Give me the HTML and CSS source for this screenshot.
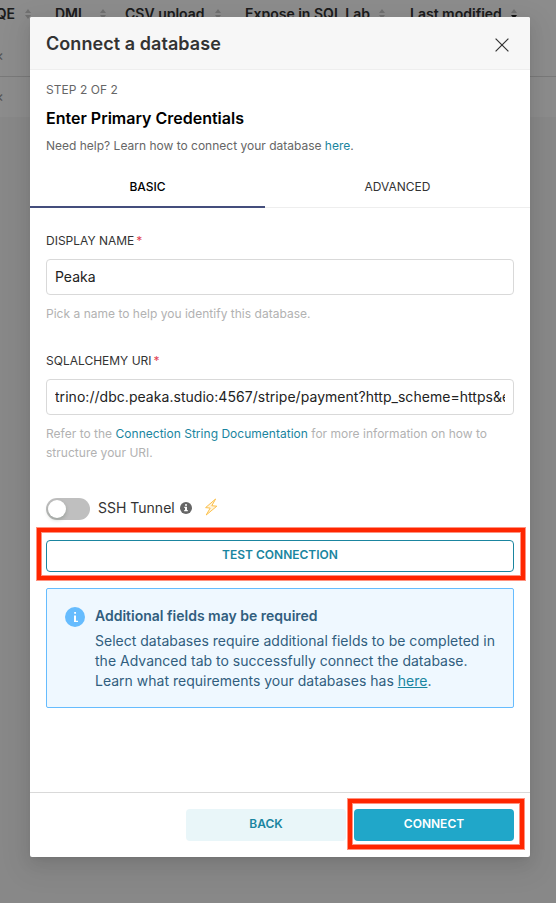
FILE: index.html
```html
<!DOCTYPE html>
<html lang="en">
<head>
<meta charset="utf-8">
<title>Connect a database</title>
<link rel="stylesheet" href="styles.css">
</head>
<body>
<div class="page">
  <div class="table">
    <div class="table-head">
      <span class="col col-aqe">AQE <i class="sort"></i></span>
      <span class="col col-dml">DML <i class="sort"></i></span>
      <span class="col col-csv">CSV upload <i class="sort"></i></span>
      <span class="col col-lab">Expose in SQL Lab <i class="sort"></i></span>
      <span class="col col-mod">Last modified <i class="sort sort-desc"></i></span>
    </div>
    <div class="table-row"><span class="cross">×</span></div>
    <div class="table-row"><span class="cross">×</span></div>
  </div>
</div>
<div class="mask">
  <div class="modal" role="dialog">
    <header class="modal-header">
      <h1 class="modal-title">Connect a database</h1>
      <svg class="close" viewBox="0 0 14 14"><path d="M.6.6l12.8 12.8M13.4.6L.6 13.4"/></svg>
    </header>
    <main class="modal-body">
      <div class="intro">
        <p class="step">STEP 2 OF 2</p>
        <h2 class="heading">Enter Primary Credentials</h2>
        <p class="help">Need help? Learn how to connect your database <a>here</a>.</p>
      </div>
      <nav class="tabs">
        <div class="tab active"><span>BASIC</span></div>
        <div class="tab"><span>ADVANCED</span></div>
      </nav>
      <div class="form">
        <div class="field">
          <label class="label"><span>DISPLAY NAME</span><span class="req">*</span></label>
          <div class="input"><span class="value">Peaka</span></div>
          <p class="hint">Pick a name to help you identify this database.</p>
        </div>
        <div class="field field-uri">
          <label class="label"><span>SQLALCHEMY URI</span><span class="req">*</span></label>
          <div class="input"><span class="value uri">trino://dbc.peaka.studio:4567/stripe/payment?http_scheme=https&amp;extra</span></div>
          <p class="hint">Refer to the <a>Connection String Documentation</a> for more information on how to structure your URI.</p>
        </div>
        <div class="ssh">
          <span class="switch"><span class="knob"></span></span>
          <span class="ssh-label">SSH Tunnel</span>
          <svg class="info" viewBox="0 0 12 12"><circle cx="6" cy="6" r="6" fill="#666"/><path d="M5 2.2h2v1.6H5zM4.3 4.8H7v3.3h.8v1.2H4.2V8.1H5V6h-.7z" fill="#fff"/></svg>
          <svg class="bolt" viewBox="0 0 14 18"><path d="M11.6 1L1.6 9.6l4.6.5-4 6.9L12.8 8.2l-5-.5z"/></svg>
        </div>
        <div class="test-button"><span>TEST CONNECTION</span><div class="marker marker-test"></div></div>
        <div class="alert">
          <svg class="alert-icon" viewBox="0 0 20 20"><circle cx="10" cy="10" r="10" fill="#66bcfe"/><path d="M9.2 5h1.8v1.7H9.2zM9 8.4h2v5.4h2V15H9z" fill="#fff"/></svg>
          <div class="alert-text">
            <strong class="alert-title">Additional fields may be required</strong>
            <p class="alert-copy">Select databases require additional fields to be completed in the Advanced tab to successfully connect the database. Learn what requirements your databases has <a>here</a>.</p>
          </div>
        </div>
      </div>
    </main>
    <footer class="modal-footer">
      <div class="button back">BACK</div>
      <div class="button connect"><span>CONNECT</span><div class="marker marker-connect"></div></div>
    </footer>
  </div>
</div>
</body>
</html>
```

FILE: styles.css
```css
* { box-sizing: border-box; }
body { margin: 0; height: 903px; overflow: hidden; font-family: Inter, "Liberation Sans", sans-serif; font-size: 14px; color: #333; background: #f7f7f7; }
h1, h2, p { margin: 0; }
a { color: #1a85a0; }

.page { height: 903px; overflow: hidden; }
.table { height: 117px; background: #fff; }
.table-head { height: 36px; position: relative; font-weight: 600; line-height: 20px; white-space: nowrap; }
.col { position: absolute; top: 4px; display: flex; align-items: center; gap: 10px; }
.col-aqe { left: -14px; }
.col-dml { left: 55px; gap: 14px; }
.col-csv { left: 125px; }
.col-lab { left: 245px; gap: 9px; }
.col-mod { left: 410px; gap: 9px; }
.sort { display: flex; flex-direction: column; gap: 2px; }
.sort::before, .sort::after { content: ""; border: 3px solid transparent; }
.sort::before { border-top: 0; border-bottom: 4px solid #ccc; }
.sort::after { border-bottom: 0; border-top: 4px solid #ccc; }
.sort-desc::after { border-top-color: #222; }
.table-row { height: 41px; border-bottom: 1px solid #ddd; line-height: 39px; }
.table-row:last-child { height: 40px; border: 0; }
.cross { margin-left: -6px; font-size: 15px; color: #999; }

.mask { position: absolute; inset: 0; padding: 17px 26px 0 30px; background: rgba(0, 0, 0, .45); }
.modal { width: 500px; height: 840px; display: flex; flex-direction: column; background: #fff; border-radius: 2px; box-shadow: 0 3px 6px -4px rgba(0,0,0,.12), 0 6px 16px rgba(0,0,0,.08), 0 9px 28px 8px rgba(0,0,0,.05); }
.modal-header { height: 53px; flex: none; display: flex; align-items: center; justify-content: space-between; padding: 2px 21px 0 16px; background: #f7f7f7; border-bottom: 1px solid #eee; border-radius: 2px 2px 0 0; }
.modal-title { font-size: 18px; font-weight: 600; line-height: 24px; letter-spacing: .06px; color: #333; }
.close { width: 14px; height: 14px; margin-top: 2px; fill: none; stroke: #333; stroke-width: 1.2; }

.modal-body { flex: 1; }
.intro { height: 97px; padding: 12px 16px 0; white-space: nowrap; }
.step { font-size: 12px; line-height: 16px; letter-spacing: .05px; color: #666; }
.heading { margin-top: 8px; font-size: 16px; font-weight: 600; line-height: 24px; color: #000; }
.help { margin-top: 8px; font-size: 12px; line-height: 16px; color: #666; }
.tabs { display: flex; height: 41px; border-bottom: 1px solid #eee; }
.tab { width: 235px; height: 41px; padding-top: 12px; text-align: center; font-size: 12px; line-height: 16px; color: #333; }
.tab + .tab { width: 265px; }
.active { border-bottom: 2px solid #444e7c; color: #000; font-weight: 450; }

.form { padding: 25px 16px 0; }
.field { height: 120px; }
.label { display: flex; gap: 2px; font-size: 12px; line-height: 16px; }
.req { color: #e04355; }
.input { height: 36px; margin-top: 10px; padding: 0 8px; border: 1px solid #d9d9d9; border-radius: 4px; }
.value { display: block; overflow: hidden; white-space: nowrap; line-height: 34px; font-size: 14px; color: #222; }
.uri { letter-spacing: .04px; }
.hint { margin-top: 9px; font-size: 12px; line-height: 19px; letter-spacing: .018px; color: #b2b2b2; }
.field-uri { height: 145px; }
.ssh { height: 22px; display: flex; align-items: center; }
.switch { width: 44px; height: 22px; padding: 2px; border-radius: 11px; background: #bfbfbf; }
.knob { display: block; width: 18px; height: 18px; border-radius: 50%; background: #fff; box-shadow: 0 2px 4px rgba(0,35,11,.2); }
.ssh-label { width: 76px; margin: -4px 0 0 8px; white-space: nowrap; }
.info { width: 12px; height: 12px; margin: -2px 0 0 6px; }
.bolt { width: 14px; height: 18px; margin: -4px 0 0 12px; fill: #fff3dc; stroke: #fcc04a; stroke-width: 1; stroke-linejoin: round; }
.test-button { position: relative; height: 32px; margin-top: 20px; border: 1px solid #1a85a0; border-radius: 4px; text-align: center; font-size: 12px; font-weight: 600; line-height: 28px; color: #1a85a0; }
.marker { position: absolute; border: 4px solid #ff2600; box-shadow: 0 0 0 1px #ff9280, inset 0 0 0 1px #ff9280; pointer-events: none; }
.marker-test { inset: -13px -12px -9px -10px; }
.marker-connect { inset: -10px -10px -8px -6px; }
.alert { height: 120px; display: flex; gap: 10px; margin-top: 16px; padding: 18px 12px 0 18px; border: 1px solid #66bcfe; border-radius: 2px; background: #eff8ff; color: #315e7e; }
.alert-icon { width: 20px; height: 20px; flex: none; }
.alert-title { display: block; margin-top: -1px; font-weight: 600; line-height: 19px; }
.alert-copy { width: 410px; margin-top: 6px; line-height: 20px; letter-spacing: .01px; }
.alert-copy a { text-decoration: underline; }

.modal-footer { height: 65px; flex: none; display: flex; justify-content: flex-end; gap: 8px; padding: 16px 16px 0; border-top: 1px solid #d9d9d9; }
.button { width: 160px; height: 32px; border-radius: 4px; text-align: center; font-size: 12px; font-weight: 600; line-height: 30px; }
.back { background: #e9f6f9; color: #1a85a0; }
.connect { position: relative; background: #20a7c9; color: #fff; }
```
